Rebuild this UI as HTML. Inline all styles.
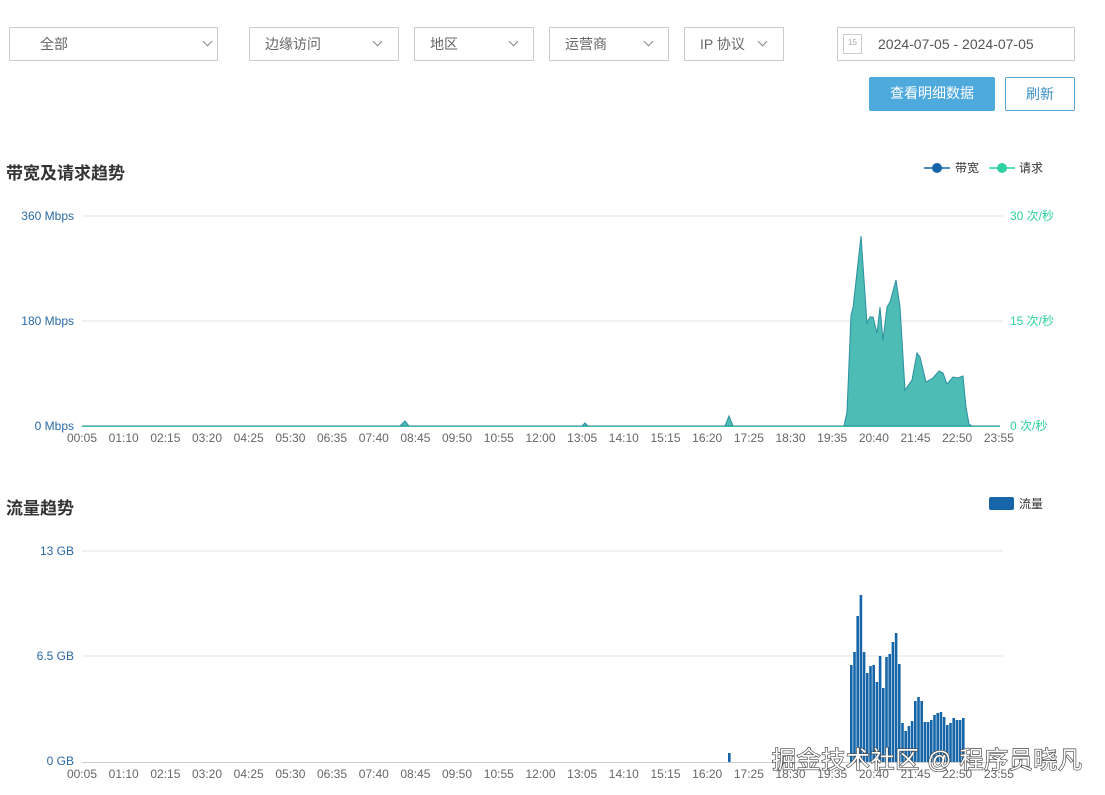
<!DOCTYPE html>
<html><head><meta charset="utf-8"><style>
body{margin:0;width:1105px;height:795px;background:#fff;font-family:"Liberation Sans","Noto Sans CJK SC",sans-serif;position:relative;overflow:hidden}
.sel{position:absolute;top:27px;height:34px;border:1px solid #ccc;box-sizing:border-box;font-size:14px;color:#666;line-height:33px}
.sel span{position:absolute}
.chev{position:absolute;top:10px;width:6px;height:6px;border-right:1.5px solid #888;border-bottom:1.5px solid #888;transform:rotate(45deg)}
.btn{position:absolute;top:77px;height:34px;box-sizing:border-box;font-size:14px;line-height:32px;text-align:center}
h2{position:absolute;margin:0;font-size:17px;font-weight:bold;color:#333}
</style></head><body>
<div class="sel" style="left:9px;width:209px"><span style="left:30px">全部</span><div class="chev" style="left:194px"></div></div>
<div class="sel" style="left:249px;width:150px"><span style="left:15px">边缘访问</span><div class="chev" style="left:124px"></div></div>
<div class="sel" style="left:414px;width:120px"><span style="left:15px">地区</span><div class="chev" style="left:95px"></div></div>
<div class="sel" style="left:549px;width:120px"><span style="left:15px">运营商</span><div class="chev" style="left:95px"></div></div>
<div class="sel" style="left:684px;width:100px"><span style="left:15px">IP 协议</span><div class="chev" style="left:74px"></div></div>
<div class="sel" style="left:837px;width:238px;color:#555"><div style="position:absolute;left:5px;top:6px;width:17px;height:18px;border:1px solid #ccc;font-size:8px;line-height:16px;text-align:center;color:#aaa">15</div><span style="left:40px">2024-07-05 - 2024-07-05</span></div>
<div class="btn" style="left:869px;width:126px;background:#4ea9dc;color:#fff;border-radius:2px">查看明细数据</div>
<div class="btn" style="left:1005px;width:70px;border:1px solid #5aa8d6;color:#3a8fc4;border-radius:2px">刷新</div>
<h2 style="left:6px;top:159px">带宽及请求趋势</h2>
<h2 style="left:6px;top:494px">流量趋势</h2>
<svg width="1105" height="795" style="position:absolute;left:0;top:0" font-family="Liberation Sans,Noto Sans CJK SC,sans-serif" font-size="12">
<line x1="924" y1="168" x2="950" y2="168" stroke="#1565a8" stroke-width="1.5"/><circle cx="937" cy="168" r="5" fill="#1565a8"/>
<text x="955" y="172" fill="#333">带宽</text>
<line x1="989" y1="168" x2="1015" y2="168" stroke="#2ecfa0" stroke-width="1.5"/><circle cx="1002" cy="168" r="5" fill="#2ecfa0"/>
<text x="1019" y="172" fill="#333">请求</text>
<rect x="989" y="497" width="25" height="13" rx="2" fill="#1565a8"/>
<text x="1019" y="508" fill="#333">流量</text>
<g stroke="#e3e3e3"><line x1="82" y1="216" x2="1003" y2="216"/><line x1="82" y1="321" x2="1003" y2="321"/>
<line x1="82" y1="551" x2="1003" y2="551"/><line x1="82" y1="656" x2="1003" y2="656"/></g>
<g fill="#2b6aa6" text-anchor="end"><text x="74" y="220">360 Mbps</text><text x="74" y="325">180 Mbps</text><text x="74" y="430">0 Mbps</text>
<text x="74" y="555">13 GB</text><text x="74" y="660">6.5 GB</text><text x="74" y="765">0 GB</text></g>
<g fill="#2ecfa0"><text x="1010" y="220">30 次/秒</text><text x="1010" y="325">15 次/秒</text><text x="1010" y="430">0 次/秒</text></g>
<path d="M82 426 L400 426 L405 421 L409 426 L582 426 L585 423 L588 426 L725 426 L729 416 L733 426 L844 426 L847 412 L851 315 L853 308 L861 236 L867 323 L870 317 L873 317 L877 333 L880 307 L883 340 L887 307 L890 302 L896 280 L900 307 L905 390 L912 380 L917 353 L920 357 L926 382 L933 378 L939 371 L943 373 L947 384 L953 377 L958 378 L963 376 L966 407 L969 424 L972 426 L1000 426 Z" fill="#4cbcb5" stroke="#2a8fa0" stroke-width="1"/>
<line x1="82" y1="426.5" x2="1000" y2="426.5" stroke="#3fb8ac"/>
<line x1="82" y1="762.5" x2="1000" y2="762.5" stroke="#ccc"/>
<g fill="#666" text-anchor="middle" font-size="12">
<text x="82" y="442">00:05</text><text x="123.7" y="442">01:10</text><text x="165.4" y="442">02:15</text><text x="207" y="442">03:20</text><text x="248.7" y="442">04:25</text><text x="290.4" y="442">05:30</text><text x="332" y="442">06:35</text><text x="373.8" y="442">07:40</text><text x="415.4" y="442">08:45</text><text x="457" y="442">09:50</text><text x="498.8" y="442">10:55</text><text x="540.5" y="442">12:00</text><text x="582.2" y="442">13:05</text><text x="623.8" y="442">14:10</text><text x="665.5" y="442">15:15</text><text x="707.2" y="442">16:20</text><text x="748.9" y="442">17:25</text><text x="790.5" y="442">18:30</text><text x="832.2" y="442">19:35</text><text x="873.9" y="442">20:40</text><text x="915.5" y="442">21:45</text><text x="957.2" y="442">22:50</text><text x="998.9" y="442">23:55</text>
</g>
<g fill="#666" text-anchor="middle" font-size="12">
<text x="82" y="778">00:05</text><text x="123.7" y="778">01:10</text><text x="165.4" y="778">02:15</text><text x="207" y="778">03:20</text><text x="248.7" y="778">04:25</text><text x="290.4" y="778">05:30</text><text x="332" y="778">06:35</text><text x="373.8" y="778">07:40</text><text x="415.4" y="778">08:45</text><text x="457" y="778">09:50</text><text x="498.8" y="778">10:55</text><text x="540.5" y="778">12:00</text><text x="582.2" y="778">13:05</text><text x="623.8" y="778">14:10</text><text x="665.5" y="778">15:15</text><text x="707.2" y="778">16:20</text><text x="748.9" y="778">17:25</text><text x="790.5" y="778">18:30</text><text x="832.2" y="778">19:35</text><text x="873.9" y="778">20:40</text><text x="915.5" y="778">21:45</text><text x="957.2" y="778">22:50</text><text x="998.9" y="778">23:55</text>
</g>
<g fill="#1565a8">
<rect x="728" y="753" width="2.6" height="9"/>
<rect x="850" y="665" width="2.6" height="97"/><rect x="853.2" y="652" width="2.6" height="110"/><rect x="856.4" y="616" width="2.6" height="146"/><rect x="859.6" y="595" width="2.6" height="167"/><rect x="862.8" y="652" width="2.6" height="110"/><rect x="866" y="673" width="2.6" height="89"/><rect x="869.2" y="666" width="2.6" height="96"/><rect x="872.4" y="665" width="2.6" height="97"/><rect x="875.6" y="682" width="2.6" height="80"/><rect x="878.8" y="656" width="2.6" height="106"/><rect x="882" y="688" width="2.6" height="74"/><rect x="885.2" y="657" width="2.6" height="105"/><rect x="888.4" y="654" width="2.6" height="108"/><rect x="891.6" y="642" width="2.6" height="120"/><rect x="894.8" y="633" width="2.6" height="129"/><rect x="898" y="664" width="2.6" height="98"/><rect x="901.2" y="723" width="2.6" height="39"/><rect x="904.4" y="731" width="2.6" height="31"/><rect x="907.6" y="726" width="2.6" height="36"/><rect x="910.8" y="721" width="2.6" height="41"/><rect x="914" y="701" width="2.6" height="61"/><rect x="917.2" y="697" width="2.6" height="65"/><rect x="920.4" y="701" width="2.6" height="61"/><rect x="923.6" y="722" width="2.6" height="40"/><rect x="926.8" y="722" width="2.6" height="40"/><rect x="930" y="720" width="2.6" height="42"/><rect x="933.2" y="715" width="2.6" height="47"/><rect x="936.4" y="713" width="2.6" height="49"/><rect x="939.6" y="712" width="2.6" height="50"/><rect x="942.8" y="717" width="2.6" height="45"/><rect x="946" y="725" width="2.6" height="37"/><rect x="949.2" y="723" width="2.6" height="39"/><rect x="952.4" y="718" width="2.6" height="44"/><rect x="955.6" y="720" width="2.6" height="42"/><rect x="958.8" y="720" width="2.6" height="42"/><rect x="962" y="718" width="2.6" height="44"/>
</g>
<text x="772" y="768" font-size="24" textLength="310" lengthAdjust="spacing" fill="#fff" stroke="#444" stroke-width="1.3" paint-order="stroke" font-family="Liberation Sans,Noto Sans CJK SC,sans-serif">掘金技术社区 @ 程序员晓凡</text>
</svg>
</body></html>
